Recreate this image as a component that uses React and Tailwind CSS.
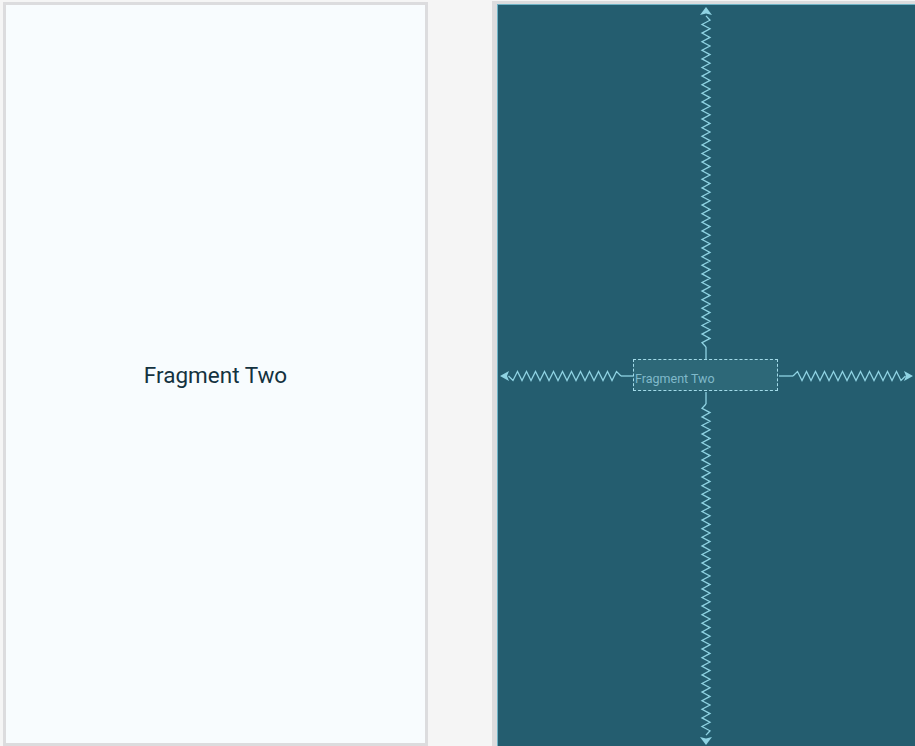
import React from "react";

const LINE = "#8fd3e3";

function zigH(x0, x1, y, amp = 4.5, period = 9) {
  let d = `M${x0},${y}`;
  const step = period / 2;
  const dir = x1 > x0 ? 1 : -1;
  const n = Math.floor(Math.abs(x1 - x0) / step);
  for (let i = 1; i <= n; i++) {
    const x = x0 + dir * i * step;
    const yy = i === n ? y : y + (i % 2 ? -amp : amp);
    d += ` L${x.toFixed(1)},${yy}`;
  }
  return d;
}

function zigV(y0, y1, x, amp = 4, period = 8.6) {
  let d = `M${x},${y0}`;
  const step = period / 2;
  const dir = y1 > y0 ? 1 : -1;
  const n = Math.floor(Math.abs(y1 - y0) / step);
  for (let i = 1; i <= n; i++) {
    const y = y0 + dir * i * step;
    const xx = i === n ? x : x + (i % 2 ? -amp : amp);
    d += ` L${xx},${y.toFixed(1)}`;
  }
  return d;
}

// coordinates are relative to the blueprint canvas (418 x 743)
function Springs() {
  const cx = 208;
  const cy = 371;
  return (
    <svg className="absolute inset-0" width="418" height="743" viewBox="0 0 418 743">
      <g stroke={LINE} strokeWidth="1.3" fill="none" strokeLinejoin="miter">
        {/* left */}
        <path d={`M136,${cy} L123,${cy}`} />
        <path d={zigH(123, 9, cy)} />
        <path d={`M9,${cy} L4,${cy}`} />
        {/* right */}
        <path d={`M281,${cy} L295,${cy}`} />
        <path d={zigH(295, 408, cy)} />
        {/* top */}
        <path d={`M${cx},355 L${cx},342`} />
        <path d={zigV(342, 10, cx)} />
        {/* bottom */}
        <path d={`M${cx},387 L${cx},399`} />
        <path d={zigV(399, 731, cx)} />
      </g>
      <g fill={LINE}>
        <path d={`M2,${cy} L11,${cy - 5} L9,${cy} L11,${cy + 5} Z`} />
        <path d={`M415,${cy} L406,${cy - 5} L408,${cy} L406,${cy + 5} Z`} />
        <path d={`M${cx},2 L${cx - 6},10 L${cx},8.5 L${cx + 6},10 Z`} />
        <path d={`M${cx},740 L${cx - 6},732 L${cx},733.5 L${cx + 6},732 Z`} />
      </g>
    </svg>
  );
}

export default function App() {
  return (
    <div className="w-[915px] h-[746px] bg-[#f5f5f5] flex overflow-hidden" style={{ fontFamily: "Roboto, 'Liberation Sans', sans-serif" }}>
      {/* Design view */}
      <div className="ml-[3px] mt-[2px] w-[425px] h-[744px] border-[3px] border-[#dcdcde] bg-[#f8fcfe] flex items-center justify-center">
        <span className="text-[22.5px] text-[#14323f] mt-[3px]">Fragment Two</span>
      </div>

      {/* Blueprint view */}
      <div className="ml-[64px] mt-[1px] w-[423px] h-[745px] border-l-[5px] border-t-[3px] border-[#dcdcde]">
        <div className="relative w-[418px] h-[743px] bg-[#245d6f] border-l border-t border-[#6fb3c6]">
          <Springs />
          <div className="absolute left-[135px] top-[354px] w-[145px] h-[32px] border border-dashed border-[#a3dbe9] bg-[#2d6878] flex items-center">
            <span className="text-[12.5px] text-[#80b9ca] pl-[1px] mt-[9px]">Fragment Two</span>
          </div>
        </div>
      </div>
    </div>
  );
}
